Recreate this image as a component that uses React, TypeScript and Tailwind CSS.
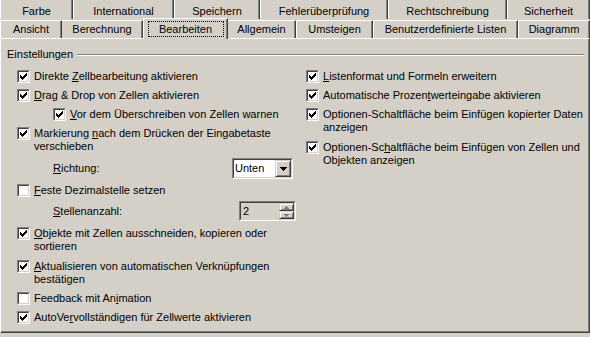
import type { ReactNode } from "react";

const row1 = [
  { label: "Farbe", w: "w-[73px]" },
  { label: "International", w: "w-[101px]" },
  { label: "Speichern", w: "w-[86px]" },
  { label: "Fehlerüberprüfung", w: "w-[128px]" },
  { label: "Rechtschreibung", w: "w-[119px]" },
  { label: "Sicherheit", w: "flex-1" },
];

function Tab({ label, w }: { label: string; w: string }) {
  return (
    <div
      className={`${w} h-[19px] pt-[3px] flex items-center justify-center border-l border-white border-r border-r-[#404040] shadow-[inset_-1px_0_0_#808080]`}
    >
      {label}
    </div>
  );
}

function Check({ checked }: { checked: boolean }) {
  return (
    <span className="shrink-0 w-[13px] h-[13px] border border-t-[#808080] border-l-[#808080] border-b-white border-r-white">
      <span className="block w-[11px] h-[11px] border border-t-[#404040] border-l-[#404040] border-b-[#d4d0c8] border-r-[#d4d0c8] bg-white">
        {checked && (
          <svg width="9" height="9" viewBox="0 0 9 9" shapeRendering="crispEdges" className="block">
            <rect x="1" y="3" width="1" height="3" fill="#000" />
            <rect x="2" y="4" width="1" height="3" fill="#000" />
            <rect x="3" y="5" width="1" height="3" fill="#000" />
            <rect x="4" y="4" width="1" height="3" fill="#000" />
            <rect x="5" y="3" width="1" height="3" fill="#000" />
            <rect x="6" y="2" width="1" height="3" fill="#000" />
            <rect x="7" y="1" width="1" height="3" fill="#000" />
          </svg>
        )}
      </span>
    </span>
  );
}

function Item({
  checked = true,
  className = "",
  children,
}: {
  checked?: boolean;
  className?: string;
  children: ReactNode;
}) {
  return (
    <div className={`flex items-start gap-[4px] ${className}`}>
      <Check checked={checked} />
      <span>{children}</span>
    </div>
  );
}

function Raised({ className = "", children }: { className?: string; children?: ReactNode }) {
  return (
    <span
      className={`flex items-center justify-center bg-[#d4d0c8] border border-t-[#d4d0c8] border-l-[#d4d0c8] border-b-[#404040] border-r-[#404040] shadow-[inset_1px_1px_0_#fff,inset_-1px_-1px_0_#808080] ${className}`}
    >
      {children}
    </span>
  );
}

function Sunken({ className = "", children }: { className?: string; children: ReactNode }) {
  return (
    <div
      className={`border border-t-[#808080] border-l-[#808080] border-b-white border-r-white ${className}`}
    >
      <div className="h-full flex border border-t-[#404040] border-l-[#404040] border-b-[#d4d0c8] border-r-[#d4d0c8]">
        {children}
      </div>
    </div>
  );
}

export default function App() {
  return (
    <div className="w-[590px] h-[337px] overflow-hidden bg-[#d4d0c8] text-black text-[11px] leading-[13px] font-['Liberation_Sans',Arial,sans-serif]">
      {/* top tab row (cut off at the top) */}
      <div className="flex">
        {row1.map((t) => (
          <Tab key={t.label} label={t.label} w={t.w} />
        ))}
      </div>

      {/* second tab row */}
      <div className="flex items-end h-[19px]">
        <div className="w-[62px] h-[18px] flex items-center justify-center border-t border-l border-white border-r border-r-[#404040] shadow-[inset_-1px_0_0_#808080]">
          Ansicht
        </div>
        <div className="w-[81px] h-[18px] flex items-center justify-center border-t border-t-white border-r border-r-[#404040] shadow-[inset_-1px_0_0_#808080]">
          Berechnung
        </div>
        <div className="relative z-10 w-[85px] h-[21px] -mb-[1px] bg-[#d4d0c8] flex items-center justify-center border-t border-l border-white border-r border-r-[#404040] shadow-[inset_-1px_0_0_#808080]">
          <span className="w-[74px] h-[14px] flex items-center justify-center outline outline-1 outline-dotted outline-black">
            Bearbeiten
          </span>
        </div>
        <div className="w-[68px] h-[18px] flex items-center justify-center border-t border-t-white border-r border-r-[#404040] shadow-[inset_-1px_0_0_#808080]">
          Allgemein
        </div>
        <div className="w-[77px] h-[18px] flex items-center justify-center border-t border-l border-white border-r border-r-[#404040] shadow-[inset_-1px_0_0_#808080]">
          Umsteigen
        </div>
        <div className="w-[145px] h-[18px] flex items-center justify-center border-t border-l border-white border-r border-r-[#404040] shadow-[inset_-1px_0_0_#808080]">
          Benutzerdefinierte Listen
        </div>
        <div className="flex-1 h-[18px] flex items-center justify-center border-t border-l border-white border-r border-r-[#404040] shadow-[inset_-1px_0_0_#808080]">
          Diagramm
        </div>
      </div>

      {/* page */}
      <div className="h-[295px] border border-t-white border-l-white border-r-[#404040] border-b-[#404040] shadow-[inset_-1px_-1px_0_#808080] pt-[9px]">
        <div className="flex items-center pl-[6px] pr-[5px]">
          <span>Einstellungen</span>
          <span className="flex-1 ml-[4px] h-[2px] border-t border-t-[#808080] border-b border-b-white" />
        </div>

        <div className="flex mt-[9px] pl-[16px]">
          <div className="w-[289px] flex flex-col">
            <Item>
              Direkte <u>Z</u>ellbearbeitung aktivieren
            </Item>
            <Item className="mt-[6px]">
              <u>D</u>rag &amp; Drop von Zellen aktivieren
            </Item>
            <Item className="mt-[6px] pl-[36px]">
              <u>V</u>or dem Überschreiben von Zellen warnen
            </Item>
            <Item className="mt-[6px]">
              Markierung <u>n</u>ach dem Drücken der Eingabetaste
              <br />
              verschieben
            </Item>
            <div className="flex items-center mt-[5px] h-[21px] pl-[36px]">
              <span className="w-[179px]">
                <u>R</u>ichtung:
              </span>
              <Sunken className="w-[61px] h-[21px]">
                <span className="flex-1 bg-white flex items-center pl-[1px]">Unten</span>
                <Raised className="w-[16px] h-[17px]">
                  <svg width="7" height="4" viewBox="0 0 7 4" shapeRendering="crispEdges">
                    <path d="M0 0h7v1H0zM1 1h5v1H1zM2 2h3v1H2zM3 3h1v1H3z" fill="#000" />
                  </svg>
                </Raised>
              </Sunken>
            </div>
            <Item checked={false} className="mt-[5px]">
              <u>F</u>este Dezimalstelle setzen
            </Item>
            <div className="flex items-center mt-[4px] h-[20px] pl-[36px]">
              <span className="w-[186px]">
                <u>S</u>tellenanzahl:
              </span>
              <Sunken className="w-[57px] h-[20px]">
                <span className="flex-1 flex items-center pl-[2px]">2</span>
                <span className="flex flex-col w-[15px]">
                  <Raised className="h-[8px]">
                    <svg width="5" height="3" viewBox="0 0 5 3" shapeRendering="crispEdges">
                      <path d="M2 0h1v1H2zM1 1h3v1H1zM0 2h5v1H0z" fill="#808080" />
                    </svg>
                  </Raised>
                  <Raised className="h-[8px]">
                    <svg width="5" height="3" viewBox="0 0 5 3" shapeRendering="crispEdges">
                      <path d="M0 0h5v1H0zM1 1h3v1H1zM2 2h1v1H2z" fill="#808080" />
                    </svg>
                  </Raised>
                </span>
              </Sunken>
            </div>
            <Item className="mt-[6px]">
              <u>O</u>bjekte mit Zellen ausschneiden, kopieren oder
              <br />
              sortieren
            </Item>
            <Item className="mt-[7px]">
              <u>A</u>ktualisieren von automatischen Verknüpfungen
              <br />
              bestätigen
            </Item>
            <Item checked={false} className="mt-[6px]">
              Feedback mit An<u>i</u>mation
            </Item>
            <Item className="mt-[6px]">
              AutoVe<u>r</u>vollständigen für Zellwerte aktivieren
            </Item>
          </div>

          <div className="flex-1 flex flex-col">
            <Item>
              <u>L</u>istenformat und Formeln erweitern
            </Item>
            <Item className="mt-[6px]">
              Automatische Prozen<u>t</u>werteingabe aktivieren
            </Item>
            <Item className="mt-[6px]">
              Optionen-Schaltfläche beim Einfügen kopierter Daten
              <br />
              anzeigen
            </Item>
            <Item className="mt-[7px]">
              Optionen-Sc<u>h</u>altfläche beim Einfügen von Zellen und
              <br />
              Objekten anzeigen
            </Item>
          </div>
        </div>
      </div>
    </div>
  );
}
